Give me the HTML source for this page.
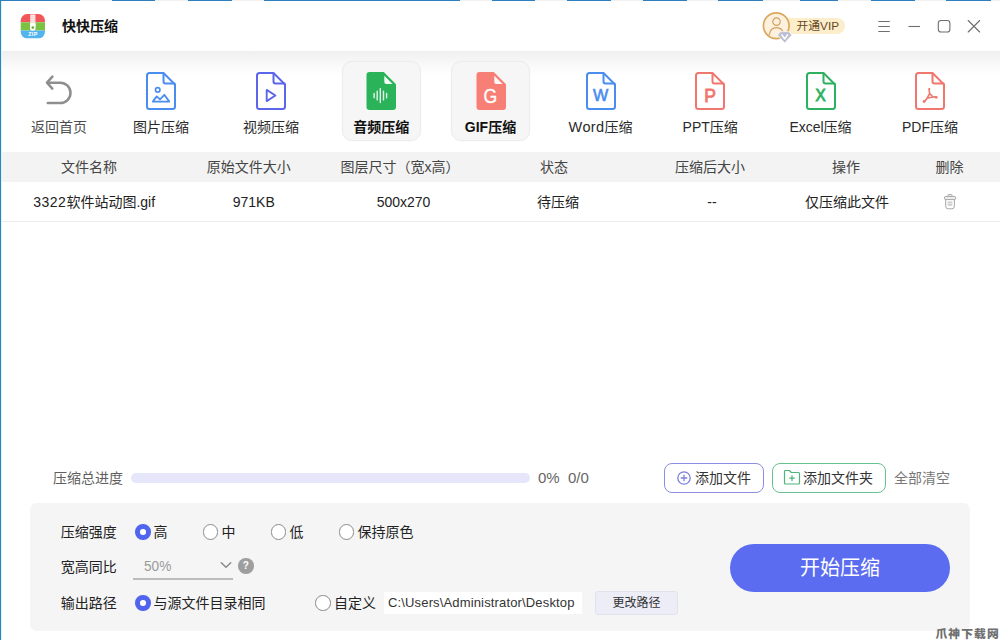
<!DOCTYPE html>
<html lang="zh-CN">
<head>
<meta charset="utf-8">
<title>快快压缩</title>
<style>
*{box-sizing:border-box;margin:0;padding:0}
html,body{width:1000px;height:640px;overflow:hidden;background:#fff}
body{font-family:"Liberation Sans","Noto Sans CJK SC",sans-serif;color:#222;position:relative;font-size:14px}
.abs{position:absolute}
#topline{left:0;top:0;width:1000px;height:1px;background:#2f7fbf}
#topline i{position:absolute;top:0;height:1px;background:#f1f1ef}
#leftline{left:0;top:0;width:1px;height:640px;background:#2d84ba}
#leftline2{left:1px;top:1px;width:1px;height:639px;background:#9fd0ea;opacity:.3}
#titlebar{left:2px;top:1px;width:998px;height:50px;background:#fff}
#title{left:62px;top:14px;font-size:14px;font-weight:700;color:#111;line-height:24px}
#toolbar{left:2px;top:51px;width:998px;height:101px;background:linear-gradient(#efefef 0,#f5f5f5 8px,#fafafa 15px,#fefefe 22px,#fff 26px,#fff 100%)}
.tile{position:absolute;top:61px;width:79.500px;height:80px;border-radius:10px;background:#f6f6f6;border:1px solid #ececec;box-shadow:0 0 2px rgba(0,0,0,.04)}
.lab{position:absolute;top:118px;width:110px;text-align:center;font-size:14px;line-height:18px;color:#2a2a2a;white-space:nowrap}
.lab.b{font-weight:700;color:#111}
.ico{position:absolute;top:71px;width:32px;height:40px}
#thead{left:2px;top:152px;width:998px;height:29.500px;background:#f3f3f3}
.th{position:absolute;top:158px;font-size:14px;line-height:18px;color:#444;text-align:center;white-space:nowrap;transform:translateX(-50%)}
.td{position:absolute;top:193px;font-size:14px;line-height:18px;color:#222;text-align:center;white-space:nowrap;transform:translateX(-50%)}
#rowline{left:2px;top:221px;width:998px;height:1px;background:#ececec}
#panel{left:30px;top:502.500px;width:940px;height:128.500px;border-radius:7px;background:#f5f5f5}
.pl{position:absolute;font-size:14px;line-height:18px;color:#222;white-space:nowrap}
.radio{position:absolute;width:15.500px;height:15.500px;border-radius:50%;border:1px solid #8a8a8a;background:#fff}
.radio.on{border:5px solid #5064ee;background:#fff}
</style>
</head>
<body>
<div class="abs" id="titlebar"></div>
<div class="abs" id="toolbar"></div>
<div class="abs" id="thead"></div>
<div class="abs" id="rowline"></div>
<div class="abs" id="panel"></div>
<div class="abs" id="topline"><i style="left:80px;width:32px"></i><i style="left:155px;width:33px"></i><i style="left:232px;width:32px"></i><i style="left:460px;width:32px"></i><i style="left:535px;width:32px"></i><i style="left:611px;width:32px"></i><i style="left:687px;width:31px"></i><i style="left:763px;width:37px"></i><i style="left:838px;width:33px"></i><i style="left:915px;width:31px"></i><i style="left:991px;width:9px"></i></div>
<div class="abs" id="leftline"></div>
<div class="abs" id="leftline2"></div>
<div class="abs" id="title">快快压缩</div>
<svg class="abs" style="left:20px;top:13px" width="26" height="26" viewBox="0 0 26 26"><defs><clipPath id="lc"><rect x="0.700" y="1" width="24.300" height="24.300" rx="6.500"/></clipPath></defs><g clip-path="url(#lc)"><rect x="0" y="0" width="26" height="9.300" fill="#f1565b"/><rect x="0" y="9.300" width="26" height="8.200" fill="#7cc242"/><rect x="0" y="17.500" width="26" height="9" fill="#52b4ef"/></g><rect x="10.200" y="1.500" width="5.200" height="11" fill="#fff" opacity=".92"/><path d="M10.200 3.200h5.200M10.200 5.200h5.200M10.200 7.200h5.200M10.200 9.200h5.200" stroke="#f1a0a0" stroke-width=".7" opacity=".7"/><path d="M10 10.500h5.600v4.500a2.800 2.800 0 0 1-5.600 0z" fill="#fff"/><circle cx="12.800" cy="14.600" r="1.300" fill="#6aa83a"/><text x="12.900" y="22.700" text-anchor="middle" font-family="Liberation Sans,sans-serif" font-weight="700" font-size="5.500" fill="#fff" letter-spacing=".3">ZIP</text></svg>
<div class="abs" style="left:776px;top:18px;width:69px;height:16px;border-radius:8px;background:#fdeecb"></div>
<svg class="abs" style="left:761px;top:11px" width="34" height="34" viewBox="0 0 34 34"><circle cx="15.250" cy="14.700" r="12.850" fill="#fdf1dd" stroke="#d9a85e" stroke-width="1.700"/><circle cx="15.500" cy="10.600" r="3.700" fill="none" stroke="#d2a061" stroke-width="1.200"/><path d="M8.300 23.600c.8-4.500 3.600-6.900 7.200-6.900s6.400 2.400 7.200 6.900" fill="none" stroke="#d2a061" stroke-width="1.200" stroke-linecap="round"/><path d="M19.600 20.700h8.300l3 3.300-7.200 8-7.200-8z" fill="#b9bdcf" stroke="#fff" stroke-width=".7" stroke-linejoin="round"/><path d="M20.800 23.800l2.900 4.200 2.900-4.200" fill="none" stroke="#fff" stroke-width="1.500" stroke-linecap="round" stroke-linejoin="round"/></svg>
<div class="abs" style="left:796.500px;top:18px;font-size:11.800px;line-height:16px;color:#65481f;white-space:nowrap">开通VIP</div>
<svg class="abs" style="left:870px;top:14px" width="120" height="24" viewBox="0 0 120 24"><g fill="none" stroke="#6f6f6f" stroke-width="1.100"><path d="M8.300 7.500h11.500M8.300 12.500h11.500M8.300 17.500h11.500"/><path d="M38.500 12.500h11.500"/><rect x="68.300" y="6.500" width="11.600" height="11.500" rx="2.800"/><path d="M98.200 6.500l11.500 11.500M109.700 6.500l-11.500 11.500" stroke-linecap="round"/></g></svg>
<svg class="abs" style="left:43px;top:73px" width="32" height="34" viewBox="0 0 32 34"><path d="M9.400 3.700L4 9.700l5.300 5.900" fill="none" stroke="#8e8e8e" stroke-width="2.500" stroke-linecap="round" stroke-linejoin="round"/><path d="M4.300 9.700h13a10.200 10.200 0 0 1 0 20.400H4.800" fill="none" stroke="#8e8e8e" stroke-width="2.500" stroke-linecap="round"/></svg>
<div class="lab" style="left:4px;color:#4c4c4c">返回首页</div>
<svg class="ico" style="left:145.0px" viewBox="0 0 32 40"><path d="M4.500 2h14l11.500 11.500V35.500a2.500 2.500 0 0 1-2.500 2.500h-23a2.500 2.500 0 0 1-2.500-2.500v-31A2.500 2.500 0 0 1 4.500 2z" fill="#fff" stroke="#4a8df0" stroke-width="2" stroke-linejoin="round"/><path d="M18.500 2.500v7.900a2 2 0 0 0 2 2h9" fill="none" stroke="#4a8df0" stroke-width="2" stroke-linecap="round" stroke-linejoin="round"/><circle cx="12.700" cy="18.900" r="2.200" fill="none" stroke="#4a8df0" stroke-width="1.700"/><path d="M7.800 30.600l3.900-5.200 3.300 3 4.300-4.600 5 6.800z" fill="none" stroke="#4a8df0" stroke-width="1.800" stroke-linejoin="round"/></svg>
<div class="lab" style="left:106.0px">图片压缩</div>
<svg class="ico" style="left:255.0px" viewBox="0 0 32 40"><path d="M4.500 2h14l11.500 11.500V35.500a2.500 2.500 0 0 1-2.500 2.500h-23a2.500 2.500 0 0 1-2.500-2.500v-31A2.500 2.500 0 0 1 4.500 2z" fill="#fff" stroke="#5b67e8" stroke-width="2" stroke-linejoin="round"/><path d="M18.500 2.500v7.900a2 2 0 0 0 2 2h9" fill="none" stroke="#5b67e8" stroke-width="2" stroke-linecap="round" stroke-linejoin="round"/><path d="M11.700 18.900v11.200l8.700-5.600z" fill="none" stroke="#5b67e8" stroke-width="1.900" stroke-linejoin="round"/></svg>
<div class="lab" style="left:216.0px">视频压缩</div>
<div class="tile" style="left:341.5px"></div>
<svg class="ico" style="left:365.2px" viewBox="0 0 32 40"><path d="M4.500 1h14.300l12.200 12.200V36a3 3 0 0 1-3 3h-23.500a3 3 0 0 1-3-3v-32A3 3 0 0 1 4.500 1z" fill="#2bb35a"/><path d="M19.300 4.800l8.300 8.300h-6.300a2 2 0 0 1-2-2z" fill="#fff" opacity=".95"/><g stroke="#fff" stroke-width="1.400" stroke-linecap="round" opacity=".88"><path d="M9.100 22.400v4.400M12.200 20.300v8.600M15.300 17.600v14M18.500 20.300v8.600M21.600 22.400v4.400"/></g></svg>
<div class="lab b" style="left:326.2px">音频压缩</div>
<div class="tile" style="left:450.8px"></div>
<svg class="ico" style="left:474.5px" viewBox="0 0 32 40"><path d="M4.500 1h14.300l12.200 12.200V36a3 3 0 0 1-3 3h-23.500a3 3 0 0 1-3-3v-32A3 3 0 0 1 4.500 1z" fill="#f77f75"/><path d="M19.300 4.800l8.300 8.300h-6.300a2 2 0 0 1-2-2z" fill="#fff" opacity=".95"/><text transform="translate(15.3 31.8) scale(0.86 1)" text-anchor="middle" font-family="Liberation Sans,sans-serif" font-size="20.5" fill="#fff" stroke="#fff" stroke-width="0.35">G</text></svg>
<div class="lab b" style="left:435.5px">GIF压缩</div>
<svg class="ico" style="left:584.5px" viewBox="0 0 32 40"><path d="M4.500 2h14l11.500 11.500V35.500a2.500 2.500 0 0 1-2.500 2.500h-23a2.500 2.500 0 0 1-2.500-2.500v-31A2.500 2.500 0 0 1 4.500 2z" fill="#fff" stroke="#4a8df0" stroke-width="2" stroke-linejoin="round"/><path d="M18.500 2.500v7.900a2 2 0 0 0 2 2h9" fill="none" stroke="#4a8df0" stroke-width="2" stroke-linecap="round" stroke-linejoin="round"/><text transform="translate(15.7 30.1) scale(0.95 1)" text-anchor="middle" font-family="Liberation Sans,sans-serif" font-size="17" fill="#4a8df0" stroke="#4a8df0" stroke-width="0.65">W</text></svg>
<div class="lab" style="left:545.5px"><span style="font-size:14.500px;letter-spacing:.35px">Word</span>压缩</div>
<svg class="ico" style="left:694.2px" viewBox="0 0 32 40"><path d="M4.500 2h14l11.500 11.500V35.500a2.500 2.500 0 0 1-2.500 2.500h-23a2.500 2.500 0 0 1-2.500-2.500v-31A2.500 2.500 0 0 1 4.500 2z" fill="#fff" stroke="#f0776d" stroke-width="2" stroke-linejoin="round"/><path d="M18.500 2.500v7.900a2 2 0 0 0 2 2h9" fill="none" stroke="#f0776d" stroke-width="2" stroke-linecap="round" stroke-linejoin="round"/><text transform="translate(16 30.8) scale(0.95 1)" text-anchor="middle" font-family="Liberation Sans,sans-serif" font-size="18.5" fill="#f0776d" stroke="#f0776d" stroke-width="0.8">P</text></svg>
<div class="lab" style="left:655.2px">PPT压缩</div>
<svg class="ico" style="left:804.5px" viewBox="0 0 32 40"><path d="M4.500 2h14l11.500 11.500V35.500a2.500 2.500 0 0 1-2.500 2.500h-23a2.500 2.500 0 0 1-2.500-2.500v-31A2.500 2.500 0 0 1 4.500 2z" fill="#fff" stroke="#2db160" stroke-width="2" stroke-linejoin="round"/><path d="M18.500 2.500v7.900a2 2 0 0 0 2 2h9" fill="none" stroke="#2db160" stroke-width="2" stroke-linecap="round" stroke-linejoin="round"/><text transform="translate(15.5 30.4) scale(0.92 1)" text-anchor="middle" font-family="Liberation Sans,sans-serif" font-size="16.5" fill="#2db160" stroke="#2db160" stroke-width="0.95">X</text></svg>
<div class="lab" style="left:765.5px">Excel压缩</div>
<svg class="ico" style="left:914.0px" viewBox="0 0 32 40"><path d="M4.500 2h14l11.500 11.500V35.500a2.500 2.500 0 0 1-2.500 2.500h-23a2.500 2.500 0 0 1-2.500-2.500v-31A2.500 2.500 0 0 1 4.500 2z" fill="#fff" stroke="#f0776d" stroke-width="2" stroke-linejoin="round"/><path d="M18.500 2.500v7.900a2 2 0 0 0 2 2h9" fill="none" stroke="#f0776d" stroke-width="2" stroke-linecap="round" stroke-linejoin="round"/><g fill="none" stroke="#f0776d" stroke-width="1.600" stroke-linecap="round" stroke-linejoin="round"><path d="M15.300 18c-.3 1.700 0 3.200.4 4.500M15.700 22.500l-2.600 4.700 5.900-1.200zM13.100 27.200c-.9 1.400-1.900 2.500-3 3.200M19 26c1.100-.2 2.200-.1 3.100.3"/></g><circle cx="10.100" cy="30.500" r="1.400" fill="#f0776d"/><circle cx="22.200" cy="26.300" r="1.400" fill="#f0776d"/><circle cx="15.300" cy="18" r="1" fill="#f0776d"/></svg>
<div class="lab" style="left:875.0px">PDF压缩</div>
<div class="th" style="left:89px">文件名称</div>
<div class="th" style="left:248.75px">原始文件大小</div>
<div class="th" style="left:400px">图层尺寸（宽x高）</div>
<div class="th" style="left:554px">状态</div>
<div class="th" style="left:710px">压缩后大小</div>
<div class="th" style="left:846px">操作</div>
<div class="th" style="left:949.5px">删除</div>
<div class="td" style="left:94.2px"><span style="letter-spacing:.5px">3322</span>软件站动图.gif</div>
<div class="td" style="left:253.75px">971KB</div>
<div class="td" style="left:403.5px">500x270</div>
<div class="td" style="left:558px">待压缩</div>
<div class="td" style="left:712px">--</div>
<div class="td" style="left:847px">仅压缩此文件</div>
<svg class="abs" style="left:942px;top:192px" width="16" height="18" viewBox="0 0 16 18"><g fill="none" stroke="#a6a6a6" stroke-width="1"><rect x="6" y="2.600" width="4" height="1.800" rx=".6"/><rect x="2.400" y="4.400" width="11.300" height="3.200" rx="1.500" fill="#ededed"/><path d="M3.700 7.700v6.500a2.600 2.600 0 0 0 2.600 2.600h3.500a2.600 2.600 0 0 0 2.600-2.600v-6.500"/><path d="M5.600 10.400h4.800M5.600 12.800h4.800" stroke="#cdcdcd" stroke-width="1.900"/></g></svg>
<div class="pl" style="left:53px;top:469px;color:#5e5e5e">压缩总进度</div>
<div class="abs" style="left:131px;top:473px;width:399px;height:10px;border-radius:5px;background:#e6e6fb"></div>
<div class="pl" style="left:538px;top:469px;color:#666;font-size:15px">0%&nbsp; 0/0</div>
<div class="abs" style="left:664px;top:462.500px;width:100px;height:30px;border:1.500px solid #8b8ee2;border-radius:8px;background:#fff"></div>
<svg class="abs" style="left:676px;top:470px" width="16" height="16" viewBox="0 0 16 16"><circle cx="8" cy="8" r="6.200" fill="none" stroke="#7d80dc" stroke-width="1.300"/><path d="M8 5.200v5.600M5.200 8h5.600" stroke="#7d80dc" stroke-width="1.300" stroke-linecap="round"/></svg>
<div class="pl" style="left:695px;top:469px;color:#333">添加文件</div>
<div class="abs" style="left:772px;top:462.500px;width:114px;height:30px;border:1.500px solid #69c090;border-radius:8px;background:#fff"></div>
<svg class="abs" style="left:783px;top:469px" width="18" height="17" viewBox="0 0 18 17"><path d="M1.500 2.500a1 1 0 0 1 1-1h4l1.800 2h7.200a1 1 0 0 1 1 1v9.500a1 1 0 0 1-1 1h-13a1 1 0 0 1-1-1z" fill="none" stroke="#4fb57c" stroke-width="1.200" stroke-linejoin="round"/><path d="M9 6.800v4.600M6.700 9.100h4.600" stroke="#4fb57c" stroke-width="1.300" stroke-linecap="round"/></svg>
<div class="pl" style="left:803px;top:469px;color:#333">添加文件夹</div>
<div class="pl" style="left:894px;top:469px;color:#777">全部清空</div>
<div class="pl" style="left:60.800px;top:523.400px">压缩强度</div>
<div class="pl" style="left:60.800px;top:557.500px">宽高同比</div>
<div class="pl" style="left:60.800px;top:594px">输出路径</div>
<div class="radio on" style="left:135.0px;top:524.25px"></div>
<div class="pl" style="left:153.500px;top:523px">高</div>
<div class="radio" style="left:202.5px;top:524.25px"></div>
<div class="pl" style="left:221.500px;top:523px">中</div>
<div class="radio" style="left:270.65px;top:524.25px"></div>
<div class="pl" style="left:289.500px;top:523px">低</div>
<div class="radio" style="left:338.85px;top:524.25px"></div>
<div class="pl" style="left:357.500px;top:523px">保持原色</div>
<div class="pl" style="left:143.500px;top:557px;color:#9a9a9a;font-size:15.500px;transform:scaleX(.88);transform-origin:0 50%">50%</div>
<svg class="abs" style="left:220px;top:561px" width="12" height="8" viewBox="0 0 12 8"><path d="M1.300 1.700l4.700 4.600 4.700-4.600" fill="none" stroke="#8a8a8a" stroke-width="1.500" stroke-linecap="round" stroke-linejoin="round"/></svg>
<div class="abs" style="left:133px;top:578px;width:100px;height:2px;background:#bcbcbc"></div>
<div class="abs" style="left:238px;top:558px;width:15.500px;height:15.500px;border-radius:50%;background:#9e9e9e;color:#fff;font-size:10px;font-weight:700;line-height:15.500px;text-align:center">?</div>
<div class="radio on" style="left:135.0px;top:595.25px"></div>
<div class="pl" style="left:153.500px;top:594px">与源文件目录相同</div>
<div class="radio" style="left:315.0px;top:595.25px"></div>
<div class="pl" style="left:334px;top:594px">自定义</div>
<div class="abs" style="left:384px;top:592px;width:197.500px;height:22px;background:#fff"></div>
<div class="pl" style="left:388px;top:594px;font-size:13px;letter-spacing:.15px;color:#333">C:\Users\Administrator\Desktop</div>
<div class="abs" style="left:595px;top:590.500px;width:83px;height:24.500px;border:1px solid #e2e2ef;border-radius:3px;background:#ededf8;font-size:12px;line-height:22.500px;text-align:center;color:#333">更改路径</div>
<div class="abs" style="left:730px;top:543.500px;width:220px;height:48px;border-radius:24px;background:#5b6cf1;color:#fff;font-size:20px;line-height:48px;text-align:center">开始压缩</div>
<div class="abs" style="left:935.500px;top:624.500px;font-size:11.800px;letter-spacing:1.050px;line-height:18px;font-weight:900;color:#707070;white-space:nowrap">爪神下载网</div>
</body>
</html>
